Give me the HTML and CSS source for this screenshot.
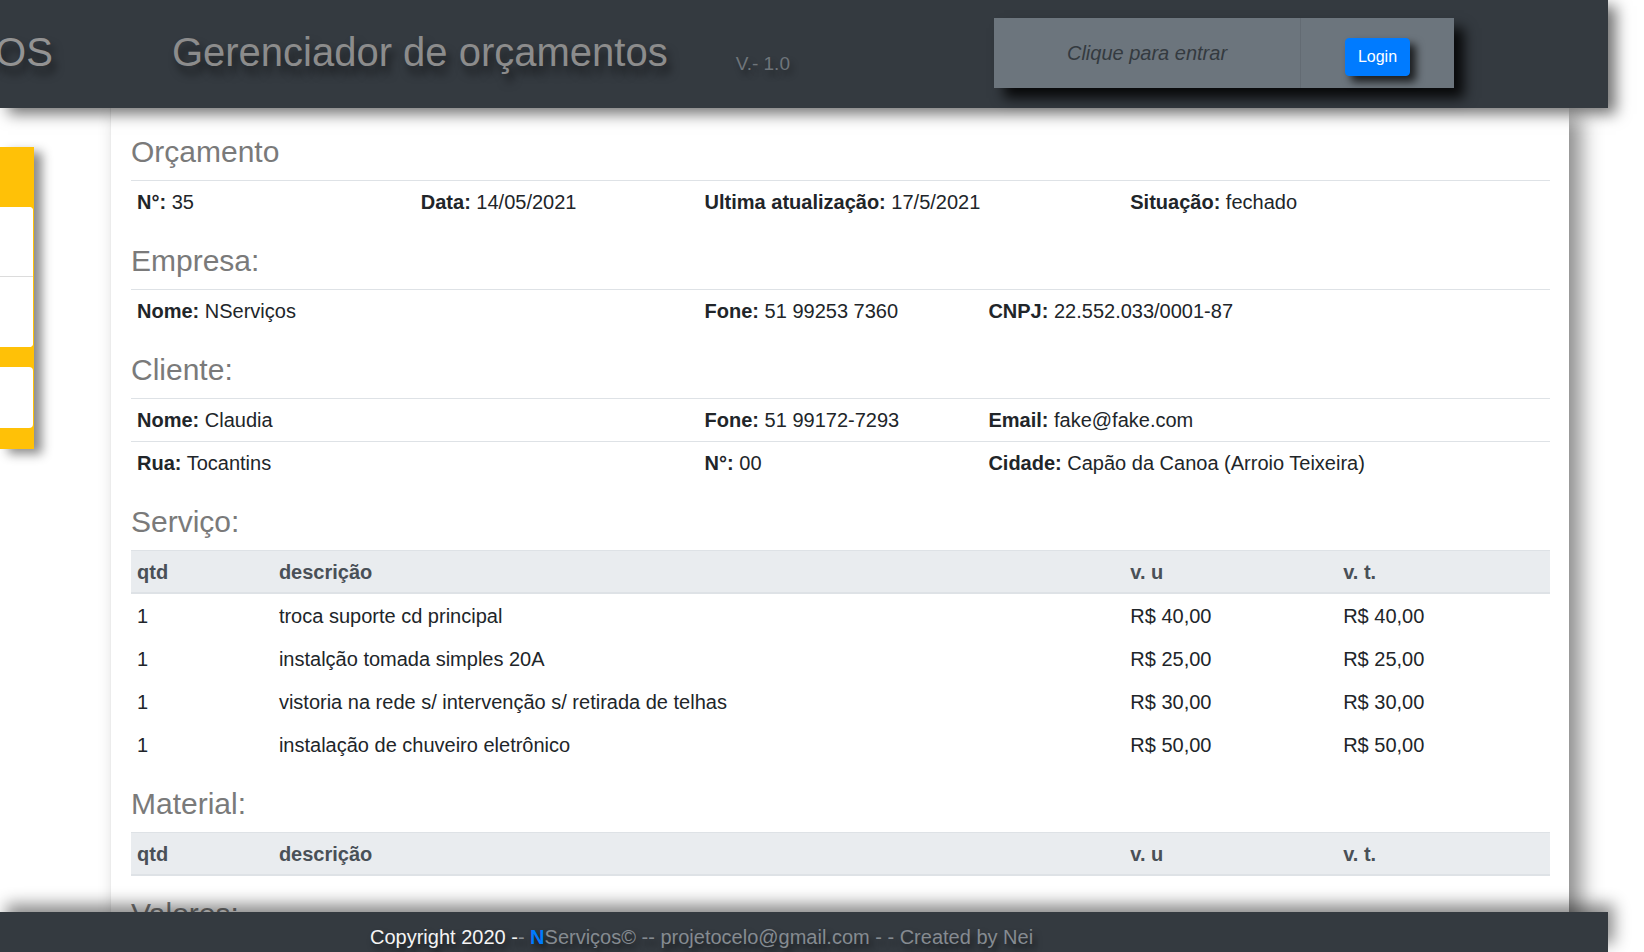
FILE: index.html
```html
<!DOCTYPE html>
<html lang="pt-BR">
<head>
<meta charset="utf-8">
<title>Gerenciador de orçamentos</title>
<link rel="stylesheet" href="styles.css">
</head>
<body>
<div class="page">
  <header class="topbar">
    <div class="brand">NSERVIÇOS</div>
    <div class="title">Gerenciador de orçamentos</div>
    <div class="version">V.- 1.0</div>
    <div class="login">
      <div class="login-field">Clique para entrar</div>
      <div class="login-action"><button class="btn-login" type="button">Login</button></div>
    </div>
  </header>

  <main class="main">
    <aside class="sidebar">
      <div class="sb-group">
        <div class="sb-item sb-first"></div>
        <div class="sb-item"></div>
      </div>
      <div class="sb-single"></div>
    </aside>

    <section class="card">
      <h4 class="sec-title">Orçamento</h4>
      <div class="info-table">
        <div class="info-row cols-4">
          <div class="cell"><b>N°:</b> 35</div>
          <div class="cell"><b>Data:</b> 14/05/2021</div>
          <div class="cell"><b>Ultima atualização:</b> 17/5/2021</div>
          <div class="cell"><b>Situação:</b> fechado</div>
        </div>
      </div>

      <h4 class="sec-title">Empresa:</h4>
      <div class="info-table">
        <div class="info-row cols-3">
          <div class="cell"><b>Nome:</b> NServiços</div>
          <div class="cell"><b>Fone:</b> 51 99253 7360</div>
          <div class="cell"><b>CNPJ:</b> 22.552.033/0001-87</div>
        </div>
      </div>

      <h4 class="sec-title">Cliente:</h4>
      <div class="info-table">
        <div class="info-row cols-3">
          <div class="cell"><b>Nome:</b> Claudia</div>
          <div class="cell"><b>Fone:</b> 51 99172-7293</div>
          <div class="cell"><b>Email:</b> fake@fake.com</div>
        </div>
        <div class="info-row cols-3">
          <div class="cell"><b>Rua:</b> Tocantins</div>
          <div class="cell"><b>N°:</b> 00</div>
          <div class="cell"><b>Cidade:</b> Capão da Canoa (Arroio Teixeira)</div>
        </div>
      </div>

      <h4 class="sec-title">Serviço:</h4>
      <table class="items">
        <colgroup><col class="c-qtd"><col class="c-desc"><col class="c-val"><col class="c-val"></colgroup>
        <thead>
          <tr><th>qtd</th><th>descrição</th><th>v. u</th><th>v. t.</th></tr>
        </thead>
        <tbody>
          <tr><td>1</td><td>troca suporte cd principal</td><td>R$ 40,00</td><td>R$ 40,00</td></tr>
          <tr><td>1</td><td>instalção tomada simples 20A</td><td>R$ 25,00</td><td>R$ 25,00</td></tr>
          <tr><td>1</td><td>vistoria na rede s/ intervenção s/ retirada de telhas</td><td>R$ 30,00</td><td>R$ 30,00</td></tr>
          <tr><td>1</td><td>instalação de chuveiro eletrônico</td><td>R$ 50,00</td><td>R$ 50,00</td></tr>
        </tbody>
      </table>

      <h4 class="sec-title">Material:</h4>
      <table class="items">
        <colgroup><col class="c-qtd"><col class="c-desc"><col class="c-val"><col class="c-val"></colgroup>
        <thead>
          <tr><th>qtd</th><th>descrição</th><th>v. u</th><th>v. t.</th></tr>
        </thead>
      </table>

      <h4 class="sec-title">Valores:</h4>
    </section>
  </main>

  <footer class="footer">
    <span class="f-white">Copyright 2020 -</span><span class="f-gray">- </span><span class="f-blue">N</span><span class="f-gray">Serviços© -- projetocelo@gmail.com - - Created by Nei</span>
  </footer>
</div>
</body>
</html>
```

FILE: styles.css
```css
* {
  box-sizing: border-box;
}

html, body {
  margin: 0;
  padding: 0;
  background: #ffffff;
}

body {
  font-family: "Liberation Sans", Arial, sans-serif;
  color: #212529;
  width: 1644px;
  height: 952px;
  overflow: hidden;
}

.page {
  display: flex;
  flex-direction: column;
  width: 1644px;
  height: 952px;
}

/* ---------- Header ---------- */
.topbar {
  position: relative;
  z-index: 3;
  flex: none;
  width: 1608px;
  height: 108px;
  background: #343a40;
  display: flex;
  align-items: flex-start;
  box-shadow: 8px 6px 14px rgba(0, 0, 0, 0.55);
}

.brand {
  flex: none;
  margin-left: -182px;
  margin-top: 28px;
  font-size: 40px;
  line-height: 48px;
  white-space: nowrap;
  color: #939393;
  text-shadow: 4px 8px 9px rgba(0, 0, 0, 0.55);
}

.title {
  flex: none;
  margin-left: 119px;
  margin-top: 28px;
  font-size: 40px;
  line-height: 48px;
  white-space: nowrap;
  color: #8c8c8c;
  text-shadow: 4px 8px 9px rgba(0, 0, 0, 0.55);
}

.version {
  flex: none;
  margin-left: 68px;
  margin-top: 52px;
  font-size: 19px;
  line-height: 23px;
  color: #6f757b;
  white-space: nowrap;
  text-shadow: 3px 5px 6px rgba(0, 0, 0, 0.4);
}

.login {
  flex: none;
  margin-left: auto;
  margin-right: 154px;
  margin-top: 18px;
  height: 70px;
  display: flex;
  background: #6c757d;
  box-shadow: 10px 10px 12px rgba(0, 0, 0, 0.85);
}

.login-field {
  width: 307px;
  border-right: 1px solid rgba(0, 0, 0, 0.08);
  line-height: 70px;
  text-align: center;
  font-style: italic;
  font-size: 20px;
  color: #343a40;
}

.login-action {
  width: 153px;
  display: flex;
  justify-content: center;
  align-items: flex-start;
  padding-top: 20px;
}

.btn-login {
  font-family: "Liberation Sans", Arial, sans-serif;
  font-size: 16px;
  line-height: 24px;
  padding: 6px 12px;
  color: #ffffff;
  background: #007bff;
  border: 1px solid #007bff;
  border-radius: 4px;
  box-shadow: 6px 6px 8px rgba(0, 0, 0, 0.75);
}

/* ---------- Main ---------- */
.main {
  position: relative;
  z-index: 1;
  flex: none;
  height: 804px;
  display: flex;
  align-items: flex-start;
  overflow: hidden;
}

.sidebar {
  flex: none;
  width: 34px;
  margin-top: 39px;
  padding: 60px 1px 21px 0;
  background: #ffc107;
  box-shadow: 8px 5px 10px rgba(0, 0, 0, 0.45);
}

.sb-group {
  background: #ffffff;
  border-radius: 0 4px 4px 0;
  overflow: hidden;
}

.sb-item {
  height: 70px;
  background: #ffffff;
}

.sb-first {
  border-bottom: 1px solid #dcdcdc;
}

.sb-single {
  margin-top: 20px;
  height: 61px;
  background: #ffffff;
  border-radius: 0 4px 4px 0;
}

.card {
  flex: none;
  width: 1459px;
  min-height: 900px;
  margin-left: 76px;
  padding: 26px 19px 0 20px;
  background: #ffffff;
  border-left: 1px solid #ececec;
  box-shadow: 12px 8px 20px rgba(0, 0, 0, 0.45);
}

.sec-title {
  margin: 0 0 10px;
  font-size: 30px;
  line-height: 36px;
  font-weight: 400;
  color: #7a7a7a;
}

.info-table {
  margin-bottom: 20px;
}

.info-row {
  display: grid;
  border-top: 1px solid #dee2e6;
  padding: 5.5px 0 6.5px;
  font-size: 20px;
  line-height: 30px;
}

.cols-4 {
  grid-template-columns: 20% 20% 30% 30%;
}

.cols-3 {
  grid-template-columns: 40% 20% 40%;
}

.cell {
  padding-left: 6px;
  white-space: nowrap;
}

.cell b {
  font-weight: 700;
}

.items {
  width: 100%;
  table-layout: fixed;
  border-collapse: separate;
  border-spacing: 0;
  margin-bottom: 20px;
  font-size: 20px;
  line-height: 30px;
}

.c-qtd { width: 10%; }
.c-desc { width: 60%; }
.c-val { width: 15%; }

.items th {
  text-align: left;
  font-weight: 700;
  color: #495057;
  background: #e9ecef;
  padding: 5.5px 6px;
  border-top: 1px solid #dee2e6;
  border-bottom: 2px solid #dee2e6;
}

.items td {
  padding: 6.5px 6px;
  color: #212529;
  white-space: nowrap;
}

/* ---------- Footer ---------- */
.footer {
  position: relative;
  z-index: 3;
  flex: none;
  width: 1608px;
  height: 40px;
  background: #343a40;
  padding: 10px 0 0 370px;
  font-size: 20px;
  line-height: 30px;
  white-space: nowrap;
  box-shadow: 6px -8px 16px rgba(0, 0, 0, 0.45);
  text-shadow: 3px 5px 6px rgba(0, 0, 0, 0.6);
}

.f-white {
  color: #f4f4f4;
}

.f-gray {
  color: #858b91;
}

.f-blue {
  color: #007bff;
  font-weight: 700;
}
```
